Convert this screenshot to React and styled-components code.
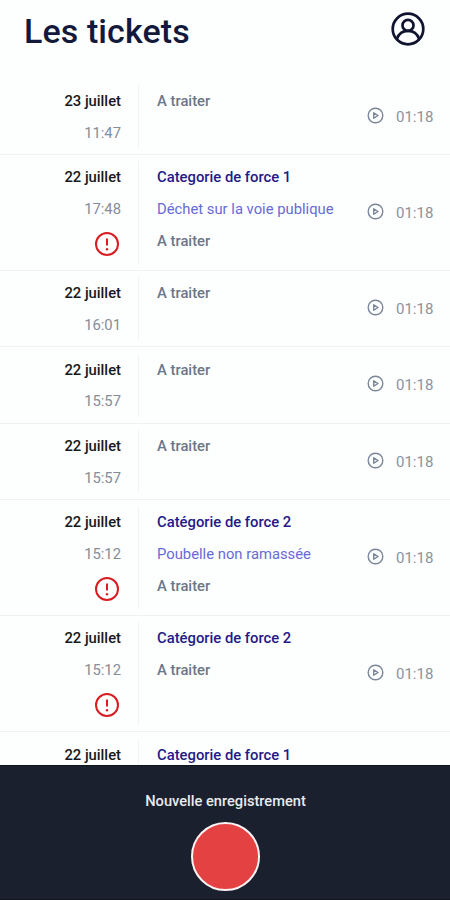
import React from "react";
import styled, { createGlobalStyle } from "styled-components";

const GlobalStyle = createGlobalStyle`
  * { box-sizing: border-box; }
  body {
    margin: 0;
    background: #fdfefe;
    font-family: Roboto, "Liberation Sans", sans-serif;
  }
`;

const Screen = styled.div`
  display: flex;
  flex-direction: column;
  width: 450px;
  height: 900px;
  overflow: hidden;
  background: #fdfefe;
`;

const Header = styled.header`
  flex: none;
  display: flex;
  justify-content: space-between;
  align-items: flex-start;
  height: 78.6px;
  padding: 11px 25px 0 24px;
`;

const Title = styled.h1`
  margin: 0;
  font-size: 34px;
  line-height: 40px;
  font-weight: 500;
  letter-spacing: 0.1px;
  color: #13193a;
`;

const ProfileButton = styled.button`
  display: flex;
  margin: 1px 0 0;
  padding: 0;
  border: 0;
  background: none;
  color: #10142f;
`;

const TicketList = styled.main`
  flex: 1;
  min-height: 0;
  overflow: hidden;
`;

const Row = styled.article`
  display: flex;
  padding: 6.4px 0 5.5px;
  border-bottom: 1px solid #eff2f4;
`;

const DateColumn = styled.div`
  flex: none;
  display: flex;
  flex-direction: column;
  align-items: flex-end;
  width: 139px;
  padding-right: 17px;
  border-right: 1px solid #f1f4f6;
`;

const Details = styled.div`
  flex: 1;
  padding-left: 18px;
`;

const TONES = {
  date: { color: "#17181c", weight: 500 },
  time: { color: "#858d9b", weight: 400 },
  category: { color: "#241a86", weight: 500 },
  subject: { color: "#6a69d8", weight: 400 },
  status: { color: "#6b7689", weight: 500 },
};

const Line = styled.div`
  height: 31.7px;
  line-height: 33px;
  font-size: 14.8px;
  white-space: nowrap;
  color: ${(p) => TONES[p.$tone].color};
  font-weight: ${(p) => TONES[p.$tone].weight};
`;

const AlertSlot = styled.div`
  display: flex;
  align-items: flex-start;
  height: 39.9px;
  padding: 7px 2px 0 0;
  color: #d81d22;
`;

const Playback = styled.div`
  flex: none;
  display: flex;
  align-items: center;
  gap: 12px;
  width: 83px;
  color: #8a93a1;
`;

const PlayButton = styled.button`
  display: flex;
  margin-top: -3px;
  padding: 0;
  border: 0;
  background: none;
  color: #7b8698;
`;

const Duration = styled.span`
  font-size: 15px;
  line-height: 20px;
`;

const Recorder = styled.footer`
  flex: none;
  display: flex;
  flex-direction: column;
  align-items: center;
  height: 135px;
  padding: 25px 0 0 1px;
  background: #1a202e;
  border-top: 1px solid #10141c;
  border-bottom: 1px solid #10141c;
`;

const RecorderLabel = styled.div`
  font-size: 14.65px;
  line-height: 20px;
  font-weight: 500;
  color: #e9ebee;
`;

const RecordButton = styled.button`
  flex: none;
  width: 69px;
  height: 69px;
  margin-top: 10.5px;
  padding: 0;
  border: 2.5px solid #fbf3f3;
  border-radius: 50%;
  background: #e34142;
`;

const UserIcon = () => (
  <svg width="34" height="34" viewBox="0 0 34 34" fill="none" stroke="currentColor" strokeWidth="2.7">
    <circle cx="17" cy="17" r="15.3" />
    <circle cx="17" cy="13.4" r="5.5" />
    <path d="M5.6 27.2C7.6 22 12 18.9 17 18.9s9.4 3.1 11.4 8.3" />
  </svg>
);

const AlertIcon = () => (
  <svg width="24" height="24" viewBox="0 0 24 24" fill="none" stroke="currentColor" strokeWidth="2">
    <circle cx="12" cy="12" r="11" />
    <path d="M12 6.4v7" />
    <circle cx="12" cy="17.2" r="1.2" fill="currentColor" stroke="none" />
  </svg>
);

const PlayIcon = () => (
  <svg width="17" height="17" viewBox="0 0 17 17" fill="none" stroke="currentColor" strokeWidth="1.4" strokeLinejoin="round">
    <circle cx="8.5" cy="8.5" r="7.3" />
    <path d="M6.7 5.8v5.4l4.4-2.7z" />
  </svg>
);

const TICKETS = [
  { date: "23 juillet", time: "11:47", status: "A traiter", duration: "01:18" },
  { date: "22 juillet", time: "17:48", alert: true, category: "Categorie de force 1", subject: "Déchet sur la voie publique", status: "A traiter", duration: "01:18" },
  { date: "22 juillet", time: "16:01", status: "A traiter", duration: "01:18" },
  { date: "22 juillet", time: "15:57", status: "A traiter", duration: "01:18" },
  { date: "22 juillet", time: "15:57", status: "A traiter", duration: "01:18" },
  { date: "22 juillet", time: "15:12", alert: true, category: "Catégorie de force 2", subject: "Poubelle non ramassée", status: "A traiter", duration: "01:18" },
  { date: "22 juillet", time: "15:12", alert: true, category: "Catégorie de force 2", status: "A traiter", duration: "01:18" },
  { date: "22 juillet", category: "Categorie de force 1" },
];

const Ticket = ({ date, time, alert, category, subject, status, duration }) => (
  <Row>
    <DateColumn>
      <Line $tone="date">{date}</Line>
      {time && <Line $tone="time">{time}</Line>}
      {alert && <AlertSlot><AlertIcon /></AlertSlot>}
    </DateColumn>
    <Details>
      {category && <Line $tone="category">{category}</Line>}
      {subject && <Line $tone="subject">{subject}</Line>}
      {status && <Line $tone="status">{status}</Line>}
    </Details>
    {duration && (
      <Playback>
        <PlayButton aria-label="Écouter"><PlayIcon /></PlayButton>
        <Duration>{duration}</Duration>
      </Playback>
    )}
  </Row>
);

export default function App() {
  return (
    <Screen>
      <GlobalStyle />
      <Header>
        <Title>Les tickets</Title>
        <ProfileButton aria-label="Profil"><UserIcon /></ProfileButton>
      </Header>
      <TicketList>
        {TICKETS.map((ticket, i) => <Ticket key={i} {...ticket} />)}
      </TicketList>
      <Recorder>
        <RecorderLabel>Nouvelle enregistrement</RecorderLabel>
        <RecordButton aria-label="Enregistrer" />
      </Recorder>
    </Screen>
  );
}
